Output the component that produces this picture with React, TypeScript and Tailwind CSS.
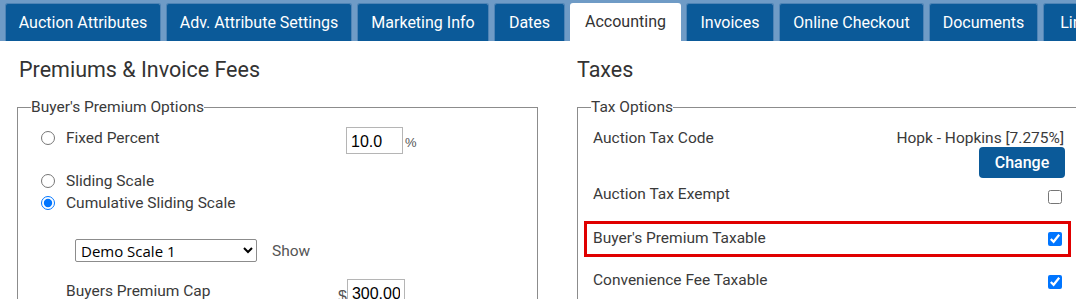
import { useState } from "react";

const tabs = [
  { label: "Auction Attributes", w: 156 },
  { label: "Adv. Attribute Settings", w: 186 },
  { label: "Marketing Info", w: 132 },
  { label: "Dates", w: 71 },
  { label: "Accounting", w: 111 },
  { label: "Invoices", w: 88 },
  { label: "Online Checkout", w: 145 },
  { label: "Documents", w: 109 },
  { label: "Links", w: 72 },
];

function Fieldset({ legend, children }: { legend: string; children: React.ReactNode }) {
  return (
    <fieldset className="border border-[#8c8c8c] min-w-0">
      <legend className="ml-[13px] px-0 text-[15.5px] leading-[18px] text-[#3a3a3a]">{legend}</legend>
      {children}
    </fieldset>
  );
}

export default function App() {
  const [scale, setScale] = useState("cumulative");
  const [exempt, setExempt] = useState(false);
  const [bpTaxable, setBpTaxable] = useState(true);
  const [feeTaxable, setFeeTaxable] = useState(true);

  return (
    <div className="w-[1076px] h-[299px] overflow-hidden bg-white font-['Roboto',sans-serif] text-[#3a3a3a]">
      {/* Tab strip */}
      <div className="flex h-[41px] items-end gap-[5px] bg-[#6f9bc6] pl-[5px] pt-[3px] whitespace-nowrap">
        {tabs.map((t) => {
          const active = t.label === "Accounting";
          return (
            <div
              key={t.label}
              style={{ width: t.w }}
              className={
                active
                  ? "flex h-[38px] shrink-0 items-center justify-center rounded-t-[3px] bg-white text-[16px] text-[#333]"
                  : "flex h-[38px] shrink-0 items-center justify-center rounded-t-[3px] border border-b-0 border-[#4f84b6] bg-[#0b5a99] text-[16px] text-white"
              }
            >
              {t.label}
            </div>
          );
        })}
      </div>

      <div className="flex gap-[39px] pl-[17px]">
        {/* Left column */}
        <div className="w-[521px] shrink-0">
          <h2 className="mt-[17px] pl-[2px] text-[21.5px] leading-[24px] text-[#333]">Premiums &amp; Invoice Fees</h2>
          <div className="mt-[16px]">
            <Fieldset legend="Buyer's Premium Options">
              <div className="pl-[23px] pt-[12px] text-[15.5px] leading-[20px]">
                <div className="flex items-start">
                  <label className="flex w-[305px] items-center gap-[11px]">
                    <input
                      type="radio"
                      name="bp"
                      checked={scale === "fixed"}
                      onChange={() => setScale("fixed")}
                      className="m-0 h-[14px] w-[14px]"
                    />
                    Fixed Percent
                  </label>
                  <div className="mt-[-1px] flex items-start">
                    <input
                      defaultValue="10.0"
                      className="h-[27px] w-[57px] border border-[#b5b5b5] px-[4px] pt-[2px] font-['Liberation_Sans',sans-serif] text-[16px] text-black outline-none"
                    />
                    <span className="ml-[2px] mt-[6px] font-['Liberation_Sans',sans-serif] text-[13px] text-[#555]">%</span>
                  </div>
                </div>

                <label className="mt-[17px] flex items-center gap-[11px]">
                  <input
                    type="radio"
                    name="bp"
                    checked={scale === "sliding"}
                    onChange={() => setScale("sliding")}
                    className="m-0 h-[14px] w-[14px]"
                  />
                  Sliding Scale
                </label>
                <label className="mt-[2px] flex items-center gap-[11px]">
                  <input
                    type="radio"
                    name="bp"
                    checked={scale === "cumulative"}
                    onChange={() => setScale("cumulative")}
                    className="m-0 h-[14px] w-[14px]"
                  />
                  Cumulative Sliding Scale
                </label>

                <div className="ml-[34px] mt-[26px] flex items-center gap-[15px]">
                  <select
                    defaultValue="Demo Scale 1"
                    className="h-[23px] w-[182px] rounded-[2px] border border-[#8c8c8c] bg-white pl-[1px] font-['Open_Sans',sans-serif] text-[15px] leading-[19px] text-black"
                  >
                    <option>Demo Scale 1</option>
                    <option>Demo Scale 2</option>
                  </select>
                  <span className="text-[#555]">Show</span>
                </div>

                <div className="mt-[19px] flex items-start pl-[25px]">
                  <span className="w-[272px] shrink-0">Buyers Premium Cap</span>
                  <span className="mt-[6px] font-['Liberation_Sans',sans-serif] text-[16px] text-[#555]">$</span>
                  <input
                    defaultValue="300.00"
                    className="mt-[-2px] h-[27px] w-[58px] border border-[#b5b5b5] px-[4px] pt-[2px] font-['Liberation_Sans',sans-serif] text-[16px] text-black outline-none"
                  />
                </div>
                <div className="h-[20px]" />
              </div>
            </Fieldset>
          </div>
        </div>

        {/* Right column */}
        <div className="w-[530px] shrink-0">
          <h2 className="mt-[17px] text-[21.5px] leading-[24px] text-[#333]">Taxes</h2>
          <div className="mt-[16px]">
            <Fieldset legend="Tax Options">
              <div className="pt-[12px] text-[15.5px] leading-[20px]">
                <div className="flex items-start justify-between pl-[15px] pr-[41px]">
                  <span>Auction Tax Code</span>
                  <div className="flex flex-col items-end">
                    <span className="mr-[1px]">Hopk - Hopkins [7.275%]</span>
                    <button className="mt-[-1px] h-[31px] w-[86px] rounded-[4px] bg-[#0b5a99] text-[16px] font-medium text-white">
                      Change
                    </button>
                  </div>
                </div>

                <div className="mt-[9px] flex items-center justify-between pl-[15px] pr-[44px]">
                  <span className="-mt-[3px]">Auction Tax Exempt</span>
                  <input
                    type="checkbox"
                    checked={exempt}
                    onChange={(e) => setExempt(e.target.checked)}
                    className="m-0 mt-[2px] h-[14px] w-[14px]"
                  />
                </div>

                <div className="ml-[6px] mr-[35px] mt-[17px] flex h-[36px] items-center justify-between border-[3px] border-[#e00000] pl-[6px] pr-[6px]">
                  <span className="-mt-[3px]">Buyer's Premium Taxable</span>
                  <input
                    type="checkbox"
                    checked={bpTaxable}
                    onChange={(e) => setBpTaxable(e.target.checked)}
                    className="m-0 h-[14px] w-[14px]"
                  />
                </div>

                <div className="mt-[16px] flex items-center justify-between pl-[15px] pr-[44px]">
                  <span className="-mt-[3px]">Convenience Fee Taxable</span>
                  <input
                    type="checkbox"
                    checked={feeTaxable}
                    onChange={(e) => setFeeTaxable(e.target.checked)}
                    className="m-0 h-[14px] w-[14px]"
                  />
                </div>
                <div className="h-[20px]" />
              </div>
            </Fieldset>
          </div>
        </div>
      </div>
    </div>
  );
}
